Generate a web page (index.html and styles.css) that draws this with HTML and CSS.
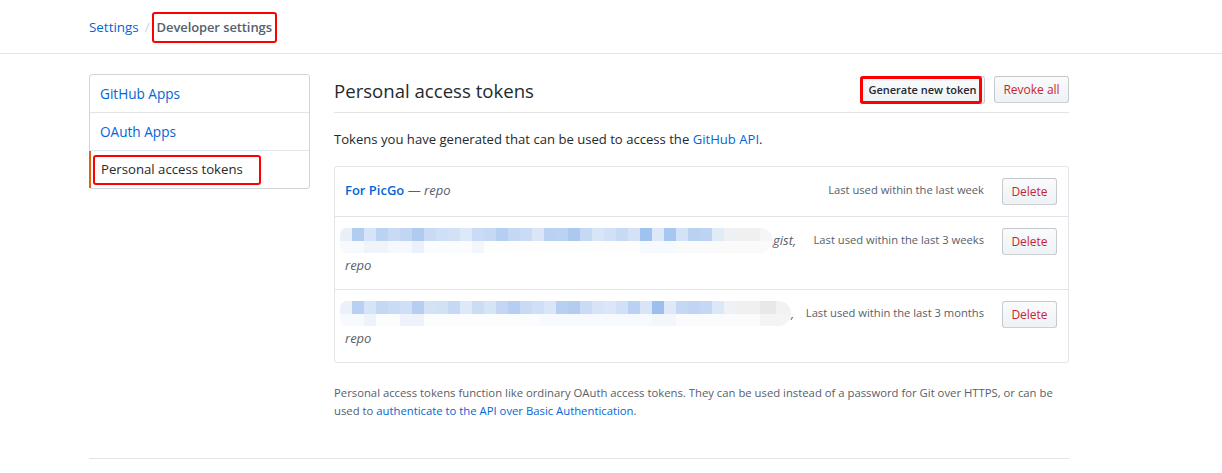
FILE: index.html
```html
<!DOCTYPE html>
<html>
<head>
<meta charset="utf-8">
<link rel="stylesheet" href="styles.css">
</head>
<body>
<header class="topbar">
  <nav class="crumbs">
    <a class="crumb-link" href="#">Settings</a>
    <span class="crumb-sep">/</span>
    <span class="mark mark-crumb"><span class="crumb-current">Developer settings</span></span>
  </nav>
</header>

<div class="layout">
  <aside class="menu">
    <a class="menu-item" href="#">GitHub Apps</a>
    <a class="menu-item" href="#">OAuth Apps</a>
    <div class="menu-item selected"><span class="mark mark-menu">Personal access tokens</span></div>
  </aside>

  <main class="main">
    <div class="subhead">
      <h2 class="subhead-title">Personal access tokens</h2>
      <div class="subhead-actions">
        <button class="btn btn-gen">Generate new token<span class="mark-overlay"></span></button>
        <button class="btn btn-danger btn-revoke">Revoke all</button>
      </div>
    </div>

    <p class="intro">Tokens you have generated that can be used to access the <a href="#">GitHub API</a>.</p>

    <div class="box">
      <div class="box-row">
        <div class="token-desc"><a class="token-name" href="#">For PicGo</a> — <em>repo</em></div>
        <div class="last-used">Last used within the last week</div>
        <button class="btn btn-danger btn-del">Delete</button>
      </div>
      <div class="box-row">
        <div class="token-desc"><span class="desc-line"><span class="blur blur-a"></span><em>gist,</em></span><br><em>repo</em></div>
        <div class="last-used">Last used within the last 3 weeks</div>
        <button class="btn btn-danger btn-del">Delete</button>
      </div>
      <div class="box-row">
        <div class="token-desc"><span class="desc-line"><span class="blur blur-b"></span><em>,</em></span><br><em>repo</em></div>
        <div class="last-used">Last used within the last 3 months</div>
        <button class="btn btn-danger btn-del">Delete</button>
      </div>
    </div>

    <p class="note">Personal access tokens function like ordinary OAuth access tokens. They can be used instead of a password for Git over HTTPS, or can be used to <a href="#">authenticate to the API over Basic Authentication</a>.</p>
  </main>
</div>
<div class="footer-rule"></div>
</body>
</html>
```

FILE: styles.css
```css
* { box-sizing: border-box; }
html, body { margin: 0; padding: 0; background: #fff; }
body {
  font-family: "Open Sans", "Noto Sans", Arial, sans-serif;
  font-size: 13px;
  line-height: 1.5;
  color: #24292e;
}
a { color: #0366d6; text-decoration: none; }

.topbar {
  height: 54px;
  border-bottom: 1px solid #e1e4e8;
  padding-left: 89px;
  display: flex;
  align-items: center;
}
.crumbs { display: flex; align-items: center; font-size: 13.4px; margin-top: 2px; }
.crumb-link { color: #0366d6; }
.crumb-sep { color: #d1d5da; margin: 0 6px 0 6px; }
.crumb-current { color: #586069; font-weight: 600; font-size: 13px; letter-spacing: -0.1px; }
.mark {
  display: inline-block;
  border: 2px solid #f00;
  border-radius: 3px;
}
.mark-crumb { padding: 3px 3px; margin-left: -4px; }

.layout {
  display: flex;
  gap: 24px;
  width: 980px;
  margin: 20px 0 0 89px;
}
.menu {
  width: 221px;
  flex: none;
  border: 1px solid #d1d5da;
  border-radius: 3px;
  align-self: flex-start;
}
.menu-item {
  display: block;
  padding: 8px 10px;
  line-height: 21px;
  font-size: 13.6px;
  border-bottom: 1px solid #e1e4e8;
}
.menu-item:last-child { border-bottom: 0; }
.menu-item.selected {
  border-left: 2px solid #e36209;
  padding: 4px 0 3px 1px;
  color: #24292e;
  margin-left: -1px;
  font-size: 13.2px;
}
.mark-menu { padding: 2px 16px 3px 6px; margin-left: 1px; }

.main { flex: 1; min-width: 0; }
.subhead {
  display: flex;
  align-items: flex-start;
  border-bottom: 1px solid #e1e4e8;
  padding: 2px 0 8px;
}
.subhead-title {
  flex: 1;
  margin: 0;
  padding-top: 2px;
  font-size: 18.6px;
  font-weight: 400;
  line-height: 26px;
}
.subhead-actions { display: flex; gap: 9px; }
.btn {
  font-family: inherit;
  font-size: 11px;
  font-weight: 600;
  line-height: 18px;
  padding: 0;
  border: 1px solid rgba(27,31,35,0.2);
  border-radius: 3px;
  background: linear-gradient(#fafbfc, #eff3f6 90%);
  color: #24292e;
  position: relative;
  height: 28px;
  white-space: nowrap;
  text-align: center;
}
.btn-gen { width: 125px; padding-left: 0; }
.btn-revoke { width: 75px; font-weight: 400; font-size: 12px; height: 27px; }
.btn-danger { color: #cb2431; }
.mark-overlay {
  position: absolute;
  left: -1px; top: -1px; right: 2px; bottom: -1px;
  border: 3px solid #f00;
  border-radius: 3px;
}

.intro { margin: 16px 0 16px; font-size: 13.1px; line-height: 21px; }

.box {
  border: 1px solid #e1e4e8;
  border-radius: 3px;
}
.box-row {
  display: flex;
  align-items: flex-start;
  padding: 11px 11px 11px 10px;
  border-top: 1px solid #e1e4e8;
  line-height: 25px;
}
.box-row:first-child { border-top: 0; }
.token-desc { flex: 1; min-width: 0; color: #586069; }
.desc-line { white-space: nowrap; }
.token-desc em { font-style: italic; }
.token-name { font-weight: 600; }
.last-used {
  font-size: 11.2px;
  color: #586069;
  line-height: 22px;
  padding-top: 1px;
  margin-right: 18px;
  white-space: nowrap;
}
.btn-del { width: 55px; height: 27px; font-size: 12px; font-weight: 400; }

.blur {
  display: inline-block;
  vertical-align: -8px;
  height: 25px;
  margin-left: -5px;
  border-radius: 8px 14px 14px 8px;
}
.blur-a {
  width: 433px;
  background:
    linear-gradient(to right,
      #e8eff9 0 12px, #b3cdf0 12px 24px, #d6e4f7 24px 36px, #bcd2f2 36px 48px,
      #c8daf4 48px 60px, #c2d6f3 60px 72px, #b1cbf0 72px 84px, #c9dbf4 84px 96px,
      #cfdff6 96px 108px, #d2e1f6 108px 120px, #dde8f8 120px 132px, #c9dbf5 132px 144px,
      #c6d9f4 144px 156px, #b6cef1 156px 168px, #c4d8f4 168px 180px, #c9dbf5 180px 192px,
      #dae6f8 192px 204px, #b9d1f2 204px 216px, #bbd2f2 216px 228px, #abc9ef 228px 240px,
      #c6d9f4 240px 252px, #d8e5f7 252px 264px, #d0e0f6 264px 276px, #c7daf4 276px 288px,
      #d5e2f5 288px 300px, #9fc2ee 300px 312px, #dce8f8 312px 324px, #a8c7ef 324px 336px,
      #d3e2f7 336px 348px, #bad2f2 348px 360px, #bcd3f3 360px 372px, #e1ebf8 372px 384px,
      #eef0f3 384px 396px, #f0f0f0 396px 420px, #f6f6f6 420px 433px) top / 100% 13px no-repeat,
    linear-gradient(to right,
      #f7f9fd 0 24px, #eff4fb 24px 48px, #f5f8fc 48px 72px, #eaf1fa 72px 84px,
      #fbfcfe 84px 132px, #f3f7fc 132px 144px, #fdfdfe 144px 300px,
      #f6f9fd 300px 336px, #fafafa 336px 433px) bottom / 100% 12px no-repeat;
}
.blur-b {
  width: 451px;
  background:
    linear-gradient(to right,
      #eaf1fa 0 12px, #b8d0f1 12px 24px, #d6e4f7 24px 36px, #c4d8f4 36px 48px,
      #cadcf5 48px 60px, #cfdff6 60px 72px, #b5cef1 72px 84px, #d4e2f6 84px 96px,
      #d1e1f6 96px 108px, #c6d9f4 108px 120px, #dde8f8 120px 132px, #cbdcf5 132px 144px,
      #d6e4f7 144px 156px, #c3d7f4 156px 168px, #b6cef1 168px 180px, #c8daf4 180px 192px,
      #cfdff6 192px 204px, #dae6f8 204px 216px, #b7cff1 216px 228px, #b3ccf0 228px 240px,
      #cadcf5 240px 252px, #d6e4f7 252px 264px, #dbe7f8 264px 276px, #d0e0f6 276px 288px,
      #b9d1f2 288px 300px, #d9e5f7 300px 312px, #9dbfed 312px 324px, #dde8f8 324px 336px,
      #c4d8f4 336px 348px, #bfd5f3 348px 360px, #c4d8f4 360px 372px, #dce8f8 372px 384px,
      #eff1f4 384px 396px, #f0f0f0 396px 420px, #e8e8e8 420px 436px, #f2f2f2 436px 451px) top / 100% 13px no-repeat,
    linear-gradient(to right,
      #f6f9fd 0 24px, #eef3fb 24px 36px, #fbfcfe 36px 60px, #eef3fb 60px 84px,
      #fbfcfe 84px 200px, #f6f9fd 200px 312px, #f3f7fc 312px 336px,
      #fafbfd 336px 420px, #f4f4f4 420px 451px) bottom / 100% 12px no-repeat;
}

.note {
  margin: 21px 0 0;
  font-size: 11.3px;
  line-height: 18px;
  color: #586069;
}

.footer-rule {
  width: 980px;
  margin: 38px 0 0 89px;
  border-top: 1px solid #e1e4e8;
}
```
